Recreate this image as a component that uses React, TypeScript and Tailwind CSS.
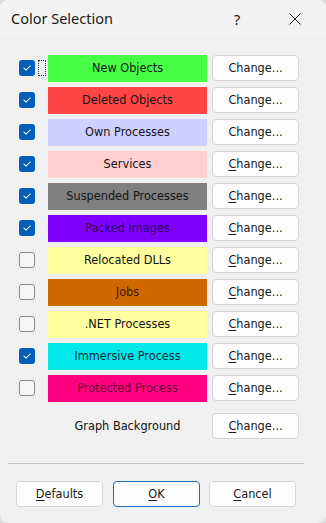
import React from "react";

type Row = { label: string; color: string; text?: string; checked: boolean; mnemonic: boolean };

const rows: Row[] = [
  { label: "New Objects", color: "bg-[#46ff46]", checked: true, mnemonic: false },
  { label: "Deleted Objects", color: "bg-[#ff4646]", checked: true, mnemonic: false },
  { label: "Own Processes", color: "bg-[#d0d0ff]", checked: true, mnemonic: false },
  { label: "Services", color: "bg-[#ffd0d0]", checked: true, mnemonic: true },
  { label: "Suspended Processes", color: "bg-[#808080]", checked: true, mnemonic: true },
  { label: "Packed Images", color: "bg-[#8000ff]", text: "text-[#2a0060]", checked: true, mnemonic: true },
  { label: "Relocated DLLs", color: "bg-[#ffffa0]", checked: false, mnemonic: true },
  { label: "Jobs", color: "bg-[#d06800]", text: "text-[#3a1a00]", checked: false, mnemonic: true },
  { label: ".NET Processes", color: "bg-[#ffffa0]", checked: false, mnemonic: true },
  { label: "Immersive Process", color: "bg-[#00e8e8]", text: "text-[#0a2a40]", checked: true, mnemonic: true },
  { label: "Protected Process", color: "bg-[#ff0080]", text: "text-[#6a0035]", checked: false, mnemonic: true },
];

function Check({ checked }: { checked: boolean }) {
  if (checked) {
    return (
      <div className="w-4 h-4 rounded-[3px] bg-[#005fb8] flex items-center justify-center">
        <svg width="10" height="10" viewBox="0 0 10 10" fill="none">
          <path d="M2 5.2 L4.1 7.2 L8 3" stroke="white" strokeWidth="1.1" strokeLinecap="round" strokeLinejoin="round" />
        </svg>
      </div>
    );
  }
  return <div className="w-4 h-4 rounded-[3px] border border-[#8a8a8a] bg-[#f6f6f6]" />;
}

function Btn({ children, primary }: { children: React.ReactNode; primary?: boolean }) {
  return (
    <button
      className={
        "h-[26px] rounded-[4px] bg-[#fdfdfd] text-[#1a1a1a] flex items-center justify-center border " +
        (primary ? "border-[#1f6fb8]" : "border-[#d3d3d3]")
      }
    >
      {children}
    </button>
  );
}

function Change({ mnemonic }: { mnemonic: boolean }) {
  return (
    <div className="w-[85px]">
      <Btn>
        <span className="w-[85px]">
          {mnemonic ? <span className="underline underline-offset-2">C</span> : "C"}
          hange...
        </span>
      </Btn>
    </div>
  );
}

export default function App() {
  return (
    <div
      className="w-[326px] h-[523px] bg-[#dcdcdc] text-[12.6px] text-[#111]"
      style={{ fontFamily: '"DejaVu Sans Condensed", "DejaVu Sans", Tahoma, sans-serif' }}
    >
      <div className="w-full h-full rounded-lg overflow-hidden bg-[#f0f0f0] flex flex-col">
        <div
          className="h-[38px] bg-[#f3f3f3] flex items-center pl-[11px] text-[14.5px] text-[#1a1a1a]"
          style={{ fontFamily: '"Noto Sans", "Open Sans", sans-serif' }}
        >
          <span className="flex-1">Color Selection</span>
          <span className="w-[46px] text-center text-[15px] mr-[12px]">?</span>
          <svg width="46" height="38" viewBox="0 0 46 38" className="mr-[8px]">
            <path d="M17.5 13.5 L28.5 24.5 M28.5 13.5 L17.5 24.5" stroke="#222" strokeWidth="1" />
          </svg>
        </div>
        <div className="pt-[17px] flex flex-col gap-[6px]">
          {rows.map((r, i) => (
            <div key={r.label} className="h-[26px] flex items-center">
              <div className="w-[19px]" />
              <Check checked={r.checked} />
              <div className="w-[13px] h-[16px] flex items-center justify-center">
                {i === 0 && <div className="w-[8px] h-[16px] border border-dotted border-[#333]" />}
              </div>
              <div
                className={
                  "w-[159px] h-[27px] flex items-center justify-center " + r.color + " " + (r.text ?? "text-[#141414]")
                }
              >
                {r.label}
              </div>
              <div className="w-[5px]" />
              <Change mnemonic={r.mnemonic} />
            </div>
          ))}
          <div className="h-[26px] flex items-center mt-[6px]">
            <div className="w-[48px]" />
            <div className="w-[159px] text-center">Graph Background</div>
            <div className="w-[5px]" />
            <Change mnemonic={true} />
          </div>
        </div>
        <div className="mt-[24px] ml-[8px] w-[296px] h-px bg-[#c2c2c2]" />
        <div className="mt-[17px] flex pl-[16px] gap-[13px]">
          <div className="w-[85px]">
            <Btn>
              <span className="w-[85px]">
                <span className="underline underline-offset-2">D</span>efaults
              </span>
            </Btn>
          </div>
          <div className="w-[85px] -ml-[1px]">
            <Btn primary>
              <span className="w-[85px]">
                <span className="underline underline-offset-2">O</span>K
              </span>
            </Btn>
          </div>
          <div className="w-[85px] -ml-[2px]">
            <Btn>
              <span className="w-[85px]">
                <span className="underline underline-offset-2">C</span>ancel
              </span>
            </Btn>
          </div>
        </div>
      </div>
    </div>
  );
}
